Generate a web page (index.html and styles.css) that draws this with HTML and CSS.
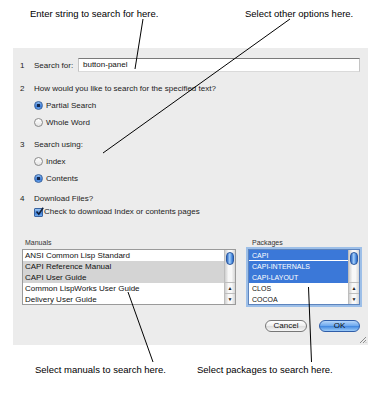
FILE: index.html
```html
<!DOCTYPE html>
<html lang="en">
<head>
    <meta charset="UTF-8">
    <title>Search Help</title>
    <link rel="stylesheet" href="styles.css">
</head>
<body>
<div class="page">
    <div class="notes notes-top">
        <span>Enter string to search for here.</span>
        <span>Select other options here.</span>
    </div>

    <div class="dialog">
        <div class="step-search">
            <span class="num">1</span>
            <span>Search for:</span>
            <div class="field">button-panel</div>
        </div>

        <div class="step">
            <span class="num">2</span>
            <div>
                <div class="question">How would you like to search for the specified text?</div>
                <div class="option"><span class="radio on"></span>Partial Search</div>
                <div class="option"><span class="radio"></span>Whole Word</div>
            </div>
        </div>

        <div class="step">
            <span class="num">3</span>
            <div>
                <div class="question">Search using:</div>
                <div class="option"><span class="radio"></span>Index</div>
                <div class="option"><span class="radio on"></span>Contents</div>
            </div>
        </div>

        <div class="step step-files">
            <span class="num">4</span>
            <div>
                <div class="question">Download Files?</div>
                <div class="option">
                    <span class="checkbox">
                        <svg width="9" height="9" viewBox="0 0 9 9"><path d="M1.5 4.5 L3.8 7.2 L8.2 0.8" fill="none" stroke="#10203c" stroke-width="1.6"/></svg>
                    </span>Check to download Index or contents pages
                </div>
            </div>
        </div>

        <div class="lists">
            <div class="list-group manuals">
                <div class="list-title">Manuals</div>
                <div class="listbox">
                    <ul class="rows">
                        <li>ANSI Common Lisp Standard</li>
                        <li class="sel">CAPI Reference Manual</li>
                        <li class="sel">CAPI User Guide</li>
                        <li>Common LispWorks User Guide</li>
                        <li>Delivery User Guide</li>
                    </ul>
                    <div class="scrollbar">
                        <div class="thumb"></div>
                        <div class="track"></div>
                        <div class="arrow">&#9650;</div>
                        <div class="arrow">&#9660;</div>
                    </div>
                </div>
            </div>
            <div class="list-group packages">
                <div class="list-title">Packages</div>
                <div class="listbox focused">
                    <ul class="rows">
                        <li class="sel first">CAPI</li>
                        <li class="sel">CAPI-INTERNALS</li>
                        <li class="sel">CAPI-LAYOUT</li>
                        <li>CLOS</li>
                        <li>COCOA</li>
                    </ul>
                    <div class="scrollbar">
                        <div class="thumb"></div>
                        <div class="track"></div>
                        <div class="arrow">&#9650;</div>
                        <div class="arrow">&#9660;</div>
                    </div>
                </div>
            </div>
        </div>

        <div class="buttons">
            <button type="button" class="btn cancel">Cancel</button>
            <button type="button" class="btn ok">OK</button>
        </div>

        <!-- resize grip in the corner -->
        <svg class="grip" width="8" height="8" viewBox="0 0 8 8">
            <path d="M7 1 L1 7 M7 4 L4 7 M7 6.5 L6.5 7" stroke="#8c8c8c" stroke-width="1"/>
        </svg>
    </div>

    <div class="notes notes-bottom">
        <span>Select manuals to search here.</span>
        <span>Select packages to search here.</span>
    </div>

    <!-- pointer lines from the notes to the controls -->
    <svg class="pointers" width="382" height="397" viewBox="0 0 382 397">
        <g stroke="#000" stroke-width="1" fill="none">
            <line x1="143" y1="19" x2="135" y2="69"/>
            <line x1="290" y1="19" x2="103" y2="153"/>
            <line x1="128" y1="292" x2="153" y2="362"/>
            <line x1="308.5" y1="287" x2="311.5" y2="362"/>
        </g>
    </svg>
</div>
</body>
</html>
```

FILE: styles.css
```css
body {
    margin: 0;
    background-color: #ffffff;
    font-family: "Liberation Sans", Arial, sans-serif;
}

.page {
    position: relative;
    width: 382px;
    height: 397px;
}

/* Notas de texto arriba y abajo */
.notes {
    display: grid;
    font-size: 9.5px;
    line-height: 11px;
    color: #000000;
}

.notes-top {
    grid-template-columns: 215px auto;
    height: 48px;
    padding: 8px 0 0 30px;
    box-sizing: border-box;
}

.notes-bottom {
    grid-template-columns: 162px auto;
    padding: 19px 0 0 35px;
}

.dialog {
    position: relative;
    margin-left: 13px;
    width: 355px;
    height: 297px;
    padding: 10px 8px 0 6px;
    box-sizing: border-box;
    background-color: #ececec;
    font-size: 8px;
    color: #222222;
}

.num {
    padding-left: 1px;
}

.step-search {
    display: grid;
    grid-template-columns: 15px 44px 1fr;
    align-items: center;
    height: 14px;
}

.field {
    height: 14px;
    box-sizing: border-box;
    padding-left: 4px;
    line-height: 12px;
    background-color: #ffffff;
    border-top: 1px solid #7a7a7a;
    border-left: 1px solid #c4c4c4;
    border-right: 1px solid #c4c4c4;
    border-bottom: 1px solid #dadada;
    color: #111111;
}

.step {
    display: grid;
    grid-template-columns: 15px 1fr;
    margin-top: 6px;
    line-height: 16px;
}

.step-search + .step {
    margin-top: 9px;
}

.question {
    line-height: 16px;
}

.option {
    display: flex;
    align-items: center;
    height: 17px;
}

.step-files {
    line-height: 12px;
}

.step-files .question {
    line-height: 12px;
}

.step-files .option {
    height: 14px;
}

.radio {
    width: 9px;
    height: 9px;
    margin-right: 3px;
    border-radius: 50%;
    box-sizing: border-box;
    border: 1px solid #8a8a8a;
    background: linear-gradient(#ffffff, #e4e4e4);
}

.radio.on {
    border-color: #3a64a0;
    background: radial-gradient(circle, #13264a 0 1.4px, transparent 2px),
                linear-gradient(#8fbdf0, #3b7ad6 60%, #6aa6ee);
}

.checkbox {
    width: 9px;
    height: 9px;
    margin-right: 1px;
    box-sizing: border-box;
    border: 1px solid #3a64a0;
    border-radius: 1px;
    background: linear-gradient(#9cc6f3, #3f7fd8 60%, #74aef0);
    display: flex;
    align-items: center;
    justify-content: center;
    overflow: visible;
}

.checkbox svg {
    flex: none;
    margin: -2px -2px 0 0;
}

/* Listas de manuales y paquetes */
.lists {
    display: flex;
    gap: 12px;
    margin: 19px 0 0 3px;
}

.manuals {
    width: 214px;
}

.packages {
    width: 112px;
}

.list-title {
    font-size: 7px;
    line-height: 10px;
    margin-bottom: 1px;
    padding-left: 3px;
    color: #333333;
}

.packages .list-title {
    padding-left: 4px;
}

.listbox {
    display: flex;
    height: 56px;
    box-sizing: border-box;
    border: 1px solid #9a9a9a;
    background-color: #ffffff;
    overflow: hidden;
}

.listbox.focused {
    border-color: #5d84bd;
    box-shadow: 0 0 0 2px #9dbfe8;
}

.rows {
    flex: 1;
    margin: 0;
    padding: 0;
    list-style: none;
}

.rows li {
    height: 11px;
    line-height: 11px;
    padding-left: 2px;
    white-space: nowrap;
    color: #111111;
}

.rows li.sel {
    background-color: #d4d4d4;
}

.packages .rows li {
    padding-left: 3px;
    font-size: 7px;
}

.packages .rows li.sel {
    background-color: #3b78d8;
    color: #ffffff;
}

.packages .rows li.first {
    height: 10px;
    border-bottom: 1px solid #ffffff;
}

.scrollbar {
    display: flex;
    flex-direction: column;
    width: 10px;
    background: linear-gradient(to right, #cfcfcf, #f8f8f8 35%, #f8f8f8 65%, #d6d6d6);
    border-left: 1px solid #bdbdbd;
}

.thumb {
    height: 13px;
    margin: 2px 1px 0;
    border-radius: 4px;
    border: 1px solid #2d5aa0;
    box-sizing: border-box;
    background: linear-gradient(to right, #2f69c4, #a6d0fa 45%, #4d8ee0 80%, #2f69c4);
}

.track {
    flex: 1;
}

.arrow {
    height: 10px;
    font-size: 5px;
    line-height: 10px;
    text-align: center;
    color: #222222;
    border-top: 1px solid #bdbdbd;
}

/* Botones */
.buttons {
    display: flex;
    justify-content: flex-end;
    gap: 12px;
    margin-top: 15px;
}

.btn {
    height: 12px;
    padding: 0;
    border-radius: 6px;
    font-family: "Liberation Sans", Arial, sans-serif;
    font-size: 8px;
    line-height: 10px;
    color: #111111;
}

.cancel {
    width: 42px;
    border: 1px solid #777777;
    background: linear-gradient(#ffffff, #eeeeee 50%, #dcdcdc 51%, #f6f6f6);
}

.ok {
    width: 41px;
    border: 1px solid #2f5da8;
    background: linear-gradient(#b5d6fa, #6aa6ee 50%, #3f86e0 51%, #9ccbf8);
}

.grip {
    position: absolute;
    right: 1px;
    bottom: 1px;
}

.pointers {
    position: absolute;
    top: 0;
    left: 0;
    pointer-events: none;
}
```
